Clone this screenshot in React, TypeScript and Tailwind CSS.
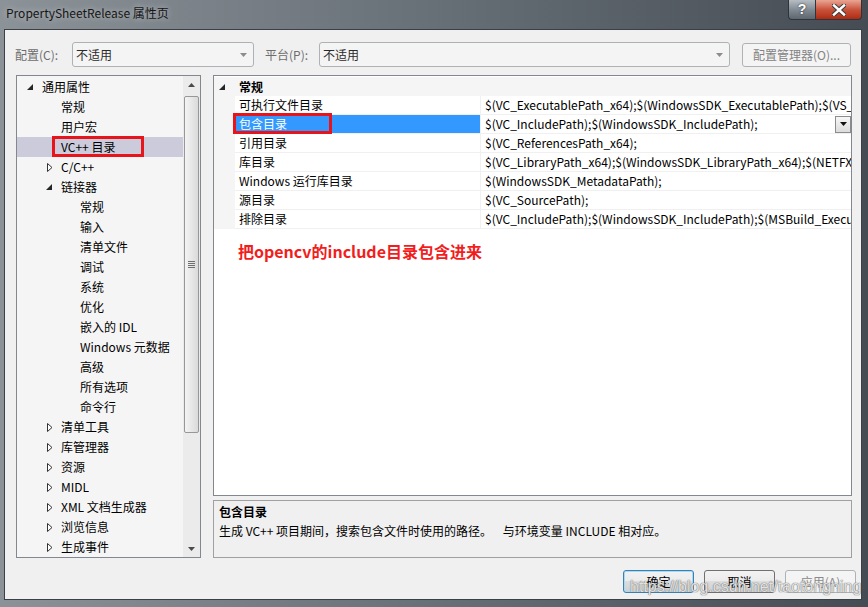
import React from 'react';

type TreeItem = { label: string; level: 0 | 1 | 2; arrow?: 'open' | 'closed'; selected?: boolean };

const treeItems: TreeItem[] = [
  { label: '通用属性', level: 0, arrow: 'open' },
  { label: '常规', level: 1 },
  { label: '用户宏', level: 1 },
  { label: 'VC++ 目录', level: 1, selected: true },
  { label: 'C/C++', level: 1, arrow: 'closed' },
  { label: '链接器', level: 1, arrow: 'open' },
  { label: '常规', level: 2 },
  { label: '输入', level: 2 },
  { label: '清单文件', level: 2 },
  { label: '调试', level: 2 },
  { label: '系统', level: 2 },
  { label: '优化', level: 2 },
  { label: '嵌入的 IDL', level: 2 },
  { label: 'Windows 元数据', level: 2 },
  { label: '高级', level: 2 },
  { label: '所有选项', level: 2 },
  { label: '命令行', level: 2 },
  { label: '清单工具', level: 1, arrow: 'closed' },
  { label: '库管理器', level: 1, arrow: 'closed' },
  { label: '资源', level: 1, arrow: 'closed' },
  { label: 'MIDL', level: 1, arrow: 'closed' },
  { label: 'XML 文档生成器', level: 1, arrow: 'closed' },
  { label: '浏览信息', level: 1, arrow: 'closed' },
  { label: '生成事件', level: 1, arrow: 'closed' },
];

const indent = ['pl-[6px]', 'pl-[25px]', 'pl-[44px]'];

const dirs = [
  {
    name: '可执行文件目录',
    value:
      '$(VC_ExecutablePath_x64);$(WindowsSDK_ExecutablePath);$(VS_ExecutablePath);$(MSBuild_ExecutablePath);$(FxCopDir);$(PATH);',
  },
  { name: '包含目录', value: '$(VC_IncludePath);$(WindowsSDK_IncludePath);', selected: true },
  { name: '引用目录', value: '$(VC_ReferencesPath_x64);' },
  {
    name: '库目录',
    value: '$(VC_LibraryPath_x64);$(WindowsSDK_LibraryPath_x64);$(NETFXKitsDir)Lib\\um\\x64',
  },
  { name: 'Windows 运行库目录', value: '$(WindowsSDK_MetadataPath);' },
  { name: '源目录', value: '$(VC_SourcePath);' },
  {
    name: '排除目录',
    value: '$(VC_IncludePath);$(WindowsSDK_IncludePath);$(MSBuild_ExecutablePath);$(VC_LibraryPath_x64);',
  },
];

function OpenArrow() {
  return (
    <svg width="6" height="6" viewBox="0 0 6 6" className="ml-[4px]">
      <polygon points="6,0 6,6 0,6" fill="#262626" />
    </svg>
  );
}

function ClosedArrow() {
  return (
    <svg width="6" height="9" viewBox="0 0 6 9" className="ml-[5px]">
      <polygon points="0.5,0.5 5,4.5 0.5,8.5" fill="white" stroke="#333" strokeWidth="1" />
    </svg>
  );
}

function Combo({ width }: { width: string }) {
  return (
    <div
      className={`flex h-[25px] items-center justify-between rounded-[3px] border border-[#adb2b5] bg-[#f4f4f4] pl-[3px] pr-[6px] ${width}`}
    >
      <span className="text-[#2a2a2a]">不适用</span>
      <svg width="7" height="4" viewBox="0 0 7 4">
        <polygon points="0,0 7,0 3.5,4" fill="#8c8c8c" />
      </svg>
    </div>
  );
}

function TreeScrollbar() {
  return (
    <div className="flex w-[17px] flex-col bg-[#ebebeb]">
      <div className="flex h-[17px] items-center justify-center">
        <svg width="7" height="4" viewBox="0 0 7 4">
          <polygon points="0,4 7,4 3.5,0" fill="#4a4a4a" />
        </svg>
      </div>
      <div className="flex-1 px-[1px] pt-[3px]">
        <div className="flex h-[337px] flex-col items-center justify-center gap-[1px] rounded-[2px] border border-[#979797] bg-gradient-to-r from-[#f4f4f4] to-[#dadada]">
          <div className="h-[1px] w-[7px] bg-[#6f6f6f]" />
          <div className="h-[1px] w-[7px] bg-[#6f6f6f]" />
          <div className="h-[1px] w-[7px] bg-[#6f6f6f]" />
          <div className="h-[1px] w-[7px] bg-[#6f6f6f]" />
        </div>
      </div>
      <div className="flex h-[17px] items-center justify-center">
        <svg width="7" height="4" viewBox="0 0 7 4">
          <polygon points="0,0 7,0 3.5,4" fill="#4a4a4a" />
        </svg>
      </div>
    </div>
  );
}

function DialogButton({ label, kind }: { label: string; kind: 'focus' | 'normal' | 'disabled' }) {
  const look =
    kind === 'disabled'
      ? 'border-[#adb2b5] bg-[#f4f4f4] text-[#8a8a8a]'
      : kind === 'focus'
        ? 'border-[#3c7fb1] bg-[linear-gradient(#f2f2f2,#ebebeb_50%,#dddddd_50%,#cfcfcf)] text-black shadow-[inset_0_0_0_1px_#a6dbf8]'
        : 'border-[#707070] bg-[linear-gradient(#f2f2f2,#ebebeb_50%,#dddddd_50%,#cfcfcf)] text-black';
  return (
    <button type="button" className={`h-[23px] w-[71px] rounded-[3px] border leading-[20px] ${look}`}>
      {label}
    </button>
  );
}

export default function App() {
  return (
    <div className="relative flex h-[607px] w-[868px] flex-col overflow-hidden bg-gradient-to-r from-[#8b9298] via-[#687077] to-[#454c53] font-['Noto_Sans_CJK_SC',sans-serif] text-[12px] text-black">
      {/* title bar */}
      <div className="flex h-[29px] shrink-0 items-start justify-between pl-[6px]">
        <div className="pt-[5px] leading-[16px] text-[#151515] [text-shadow:0_0_6px_rgba(255,255,255,0.55)]">
          PropertySheetRelease 属性页
        </div>
        <div className="mr-[6px] flex h-[20px]">
          <div className="flex w-[28px] items-center justify-center rounded-bl-[4px] border border-t-0 border-[#2f343a] bg-gradient-to-b from-[#b7bdc3] via-[#838c95] to-[#5d666f] font-['Liberation_Sans',sans-serif] text-[14px] font-bold text-white [text-shadow:0_0_2px_#222]">
            ?
          </div>
          <div className="flex w-[46px] items-center justify-center rounded-br-[4px] border border-l-0 border-t-0 border-[#2f343a] bg-gradient-to-b from-[#e9a595] via-[#c9533b] to-[#b02a10]">
            <svg width="14" height="12" viewBox="0 0 14 12">
              <path d="M2 1.5 L12 10.5 M12 1.5 L2 10.5" stroke="#3b3b3b" strokeWidth="4.5" strokeLinecap="square" />
              <path d="M2 1.5 L12 10.5 M12 1.5 L2 10.5" stroke="#ffffff" strokeWidth="2.5" strokeLinecap="square" />
            </svg>
          </div>
        </div>
      </div>

      {/* dialog body */}
      <div className="mb-[7px] ml-[4px] mr-[6px] flex flex-1 flex-col border border-[#3a4046] bg-[#f0f0f0]">
        {/* configuration row */}
        <div className="flex items-center pl-[10px] pt-[12px]">
          <span className="w-[57px] text-[#6d6d6d]">配置(C):</span>
          <Combo width="w-[182px]" />
          <span className="ml-[11px] w-[54px] text-[#6d6d6d]">平台(P):</span>
          <Combo width="w-[411px]" />
          <button
            type="button"
            className="ml-[12px] h-[24px] w-[109px] rounded-[3px] border border-[#adb2b5] bg-[#f4f4f4] text-[#838383]"
          >
            配置管理器(O)...
          </button>
        </div>

        <div className="mt-[8px] flex pl-[11px]">
          {/* property tree */}
          <div className="flex h-[483px] w-[185px] border border-[#828790] bg-[#f5f5f5]">
            <div className="flex-1 pt-[1px]">
              {treeItems.map((item, i) => (
                <div
                  key={i}
                  className={`flex h-[20px] items-center leading-[20px] ${indent[item.level]} ${item.selected ? 'bg-[#cbcbdb]' : ''}`}
                >
                  <span className="flex w-[19px] items-center">
                    {item.arrow === 'open' && <OpenArrow />}
                    {item.arrow === 'closed' && <ClosedArrow />}
                  </span>
                  <span className="relative whitespace-nowrap">
                    {item.label}
                    {item.selected && (
                      <span className="absolute -left-[9px] -top-[1px] h-[21px] w-[92px] border-[3px] border-[#e8141c]" />
                    )}
                  </span>
                </div>
              ))}
            </div>
            <TreeScrollbar />
          </div>

          <div className="ml-[12px] flex w-[639px] flex-col gap-[4px]">
            {/* property grid */}
            <div className="flex h-[421px] flex-col border border-[#828790] bg-white pt-[1px]">
              <div className="flex h-[19px] items-center bg-[#f5f5f5]">
                <span className="flex w-[21px] items-center pl-[1px]">
                  <OpenArrow />
                </span>
                <span className="pl-[4px] font-bold">常规</span>
              </div>
              {dirs.map((d) => (
                <div key={d.name} className="flex h-[19px]">
                  <div className="w-[21px] bg-[#f5f5f5]" />
                  <div
                    className={`relative w-[245px] border-b border-[#f0f0f0] pl-[4px] leading-[18px] ${d.selected ? 'bg-[#3399ff] text-white' : ''}`}
                  >
                    {d.name}
                    {d.selected && (
                      <span className="absolute -left-[2px] -top-[2px] h-[21px] w-[99px] border-[3px] border-[#e8141c]" />
                    )}
                  </div>
                  <div className="flex min-w-0 flex-1 items-center justify-between border-b border-l border-[#f0f0f0] pl-[4px]">
                    <span className="overflow-hidden whitespace-nowrap leading-[18px]">{d.value}</span>
                    {d.selected && (
                      <span className="flex h-[17px] w-[16px] shrink-0 items-center justify-center border border-[#8c8c8c] bg-gradient-to-b from-[#f7f7f7] to-[#dcdcdc]">
                        <svg width="7" height="4" viewBox="0 0 7 4">
                          <polygon points="0,0 7,0 3.5,4" fill="#111" />
                        </svg>
                      </span>
                    )}
                  </div>
                </div>
              ))}
              <div className="mt-[12px] pl-[24px] text-[16px] font-bold leading-[20px] text-[#f21d1d]">
                把opencv的include目录包含进来
              </div>
            </div>

            {/* description */}
            <div className="h-[58px] border border-[#a0a0a0] bg-[#f0f0f0] pl-[5px] pt-[1px] leading-[19px]">
              <div className="font-bold">包含目录</div>
              <div className="whitespace-pre">生成 VC++ 项目期间，搜索包含文件时使用的路径。    与环境变量 INCLUDE 相对应。</div>
            </div>
          </div>
        </div>

        {/* dialog buttons */}
        <div className="mt-[12px] flex justify-end gap-[10px] pr-[5px]">
          <DialogButton label="确定" kind="focus" />
          <DialogButton label="取消" kind="normal" />
          <DialogButton label="应用(A)" kind="disabled" />
        </div>
      </div>

      {/* watermark */}
      <div className="pointer-events-none absolute left-[630px] top-[578px] font-['Liberation_Sans',sans-serif] text-[16px] leading-[18px] text-white/80 [text-shadow:0_0_1px_#6a6a6a,0_0_1px_#6a6a6a]">
        https://blog.csdn.net/taotongning
      </div>
    </div>
  );
}
